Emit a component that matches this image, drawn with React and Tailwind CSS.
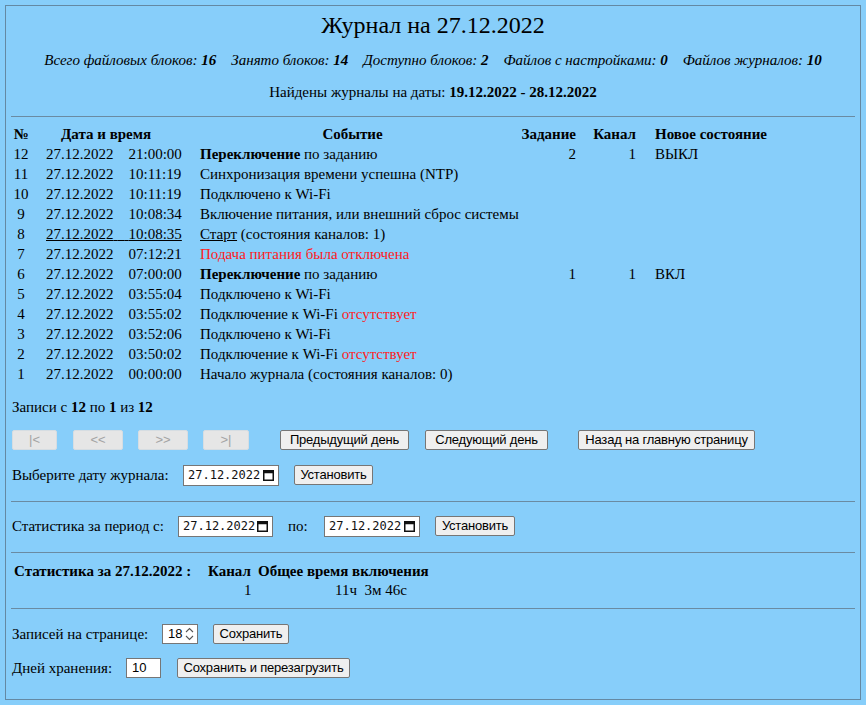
import React from "react";

const serif = { fontFamily: '"Liberation Serif", "Times New Roman", serif' };
const sans = { fontFamily: '"Liberation Sans", Arial, sans-serif' };
const mono = { fontFamily: '"DejaVu Sans Mono", "Liberation Mono", monospace' };

const NB = "\u00a0";

const rows = [
  { n: "12", d: "27.12.2022", t: "21:00:00", ev: [["b", "Переключение"], ["n", " по заданию"]], task: "2", ch: "1", st: "ВЫКЛ" },
  { n: "11", d: "27.12.2022", t: "10:11:19", ev: [["n", "Синхронизация времени успешна (NTP)"]] },
  { n: "10", d: "27.12.2022", t: "10:11:19", ev: [["n", "Подключено к Wi-Fi"]] },
  { n: "9", d: "27.12.2022", t: "10:08:34", ev: [["n", "Включение питания, или внешний сброс системы"]] },
  { n: "8", d: "27.12.2022", t: "10:08:35", u: true, ev: [["u", "Старт"], ["n", " (состояния каналов: 1)"]] },
  { n: "7", d: "27.12.2022", t: "07:12:21", ev: [["r", "Подача питания была отключена"]] },
  { n: "6", d: "27.12.2022", t: "07:00:00", ev: [["b", "Переключение"], ["n", " по заданию"]], task: "1", ch: "1", st: "ВКЛ" },
  { n: "5", d: "27.12.2022", t: "03:55:04", ev: [["n", "Подключено к Wi-Fi"]] },
  { n: "4", d: "27.12.2022", t: "03:55:02", ev: [["n", "Подключение к Wi-Fi "], ["r", "отсутствует"]] },
  { n: "3", d: "27.12.2022", t: "03:52:06", ev: [["n", "Подключено к Wi-Fi"]] },
  { n: "2", d: "27.12.2022", t: "03:50:02", ev: [["n", "Подключение к Wi-Fi "], ["r", "отсутствует"]] },
  { n: "1", d: "27.12.2022", t: "00:00:00", ev: [["n", "Начало журнала (состояния каналов: 0)"]] },
];

function Ev({ parts }) {
  return parts.map(([k, s], i) => {
    if (k === "b") return <b key={i} className="font-bold">{s}</b>;
    if (k === "u") return <span key={i} className="underline">{s}</span>;
    if (k === "r") return <span key={i} className="text-[#ff1a1a]">{s}</span>;
    return <span key={i} className="whitespace-pre">{s}</span>;
  });
}

function Btn({ children, w }) {
  return (
    <button
      style={sans}
      className={`h-[20px] flex items-center justify-center text-[13px] leading-[16px] text-black bg-[#efefef] border border-[#767676] rounded-[2px] whitespace-nowrap tracking-[-0.2px] ${w || ""}`}
    >
      {children}
    </button>
  );
}

function DisBtn({ children, w }) {
  return (
    <button
      style={sans}
      className={`h-[20px] flex items-center justify-center text-[13px] leading-[16px] text-[#a3a3a3] bg-[#e6e6e6] border border-[#d6dde2] rounded-[2px] ${w}`}
    >
      {children}
    </button>
  );
}

function CalIcon() {
  return (
    <svg width="11" height="12" viewBox="0 0 11 12" className="block">
      <rect x="0.75" y="1.75" width="9.5" height="9.5" fill="none" stroke="#111" strokeWidth="1.5" />
      <rect x="0.75" y="1.75" width="9.5" height="2.5" fill="#111" />
    </svg>
  );
}

function DateInput({ w }) {
  return (
    <div className={`h-[21px] ${w} bg-white border border-[#767676] flex items-center pl-[4px] pr-[4px] justify-between`}>
      <span style={mono} className="text-[12px] leading-[14px] text-[#111]">27.12.2022</span>
      <CalIcon />
    </div>
  );
}

function Hr() {
  return <div className="h-px bg-[#6a8ba2]" />;
}

export default function App() {
  return (
    <div style={serif} className="w-[866px] h-[705px] bg-[#87cefa] p-[5px] text-black">
      <div className="h-[695px] border border-[#6489a3] px-[5px]">
        <div className="mt-[5px] h-[28px] text-center text-[24px] leading-[28px]">Журнал на 27.12.2022</div>
        <div className="mt-[11px] h-[20px] text-center text-[15px] leading-[20px] italic whitespace-pre">
          Всего файловых блоков: <b>16</b>{NB}{NB}{NB} Занято блоков: <b>14</b>{NB}{NB}{NB} Доступно блоков: <b>2</b>{NB}{NB}{NB} Файлов с настройками: <b>0</b>{NB}{NB}{NB} Файлов журналов: <b>10</b>
        </div>
        <div className="mt-[12px] h-[20px] text-center text-[15px] leading-[20px]">
          Найдены журналы на даты: <b>19.12.2022 - 28.12.2022</b>
        </div>
        <div className="mt-[14px]"><Hr /></div>

        <div className="mt-[8px] text-[15px]">
          <div className="flex h-[19px] items-center font-bold leading-[19px]">
            <div className="w-[20px] text-center">№</div>
            <div className="w-[169px] pl-[30px]">Дата и время</div>
            <div className="w-[305px] text-center">Событие</div>
            <div className="w-[71px] text-right">Задание</div>
            <div className="w-[60px] text-right">Канал</div>
            <div className="pl-[19px] whitespace-nowrap">Новое состояние</div>
          </div>
          {rows.map((r) => (
            <div key={r.n} className="flex h-[20px] items-center leading-[20px]">
              <div className="w-[20px] text-center">{r.n}</div>
              <div className="w-[169px] pl-[15px]">
                <span className={`whitespace-pre ${r.u ? "underline" : ""}`}>{r.d}{NB}{NB}{NB}{NB}{r.t}</span>
              </div>
              <div className="w-[305px] whitespace-nowrap"><Ev parts={r.ev} /></div>
              <div className="w-[71px] text-right">{r.task || ""}</div>
              <div className="w-[60px] text-right">{r.ch || ""}</div>
              <div className="pl-[19px]">{r.st || ""}</div>
            </div>
          ))}
        </div>

        <div className="mt-[13px] h-[20px] text-[15px] leading-[20px] pl-[1px]">
          Записи с <b>12</b> по <b>1</b> из <b>12</b>
        </div>

        <div className="mt-[13px] h-[20px] flex items-center pl-[1px]">
          <DisBtn w="w-[45px]">|&lt;</DisBtn>
          <div className="ml-[16px]"><DisBtn w="w-[50px]">&lt;&lt;</DisBtn></div>
          <div className="ml-[15px]"><DisBtn w="w-[50px]">&gt;&gt;</DisBtn></div>
          <div className="ml-[15px]"><DisBtn w="w-[46px]">&gt;|</DisBtn></div>
          <div className="ml-[31px]"><Btn w="w-[129px]">Предыдущий день</Btn></div>
          <div className="ml-[16px]"><Btn w="w-[123px]">Следующий день</Btn></div>
          <div className="ml-[30px]"><Btn w="w-[177px]">Назад на главную страницу</Btn></div>
        </div>

        <div className="mt-[14px] h-[22px] flex items-center text-[15px]">
          <div className="w-[172px] pl-[1px]">Выберите дату журнала:</div>
          <DateInput w="w-[96px]" />
          <div className="ml-[15px]"><Btn w="w-[79px]">Установить</Btn></div>
        </div>

        <div className="mt-[15px]"><Hr /></div>

        <div className="mt-[13px] h-[22px] flex items-center text-[15px]">
          <div className="w-[167px] pl-[1px]">Статистика за период с:</div>
          <DateInput w="w-[95px]" />
          <div className="ml-[15px] w-[36px]">по:</div>
          <DateInput w="w-[96px]" />
          <div className="ml-[15px]"><Btn w="w-[80px]">Установить</Btn></div>
        </div>

        <div className="mt-[15px]"><Hr /></div>

        <div className="mt-[8px] text-[15px]">
          <div className="flex h-[20px] items-center font-bold leading-[20px] whitespace-nowrap">
            <div className="w-[197px] pl-[3px]">Статистика за 27.12.2022 :</div>
            <div className="w-[50px]">Канал</div>
            <div>Общее время включения</div>
          </div>
          <div className="flex h-[19px] items-center leading-[19px] whitespace-pre">
            <div className="w-[233px]" />
            <div className="w-[91px]">1</div>
            <div>11ч{NB}{NB}3м 46с</div>
          </div>
        </div>

        <div className="mt-[8px]"><Hr /></div>

        <div className="mt-[15px] h-[20px] flex items-center text-[15px]">
          <div className="w-[151px] pl-[1px]">Записей на странице:</div>
          <div className="h-[20px] w-[36px] bg-white border border-[#767676] flex items-center pl-[5px] pr-[2px] justify-between">
            <span style={sans} className="text-[13px] leading-[16px]">18</span>
            <svg width="11" height="16" viewBox="0 0 11 16" className="block">
              <path d="M2 6 L5.5 2.5 L9 6" fill="none" stroke="#555" strokeWidth="1.1" />
              <path d="M2 10 L5.5 13.5 L9 10" fill="none" stroke="#555" strokeWidth="1.1" />
            </svg>
          </div>
          <div className="ml-[15px]"><Btn w="w-[76px]">Сохранить</Btn></div>
        </div>

        <div className="mt-[14px] h-[20px] flex items-center text-[15px]">
          <div className="w-[115px] pl-[1px]">Дней хранения:</div>
          <div className="h-[20px] w-[35px] bg-white border border-[#767676] flex items-center pl-[5px]">
            <span style={sans} className="text-[13px] leading-[16px]">10</span>
          </div>
          <div className="ml-[16px]"><Btn w="w-[173px]">Сохранить и перезагрузить</Btn></div>
        </div>
      </div>
    </div>
  );
}
